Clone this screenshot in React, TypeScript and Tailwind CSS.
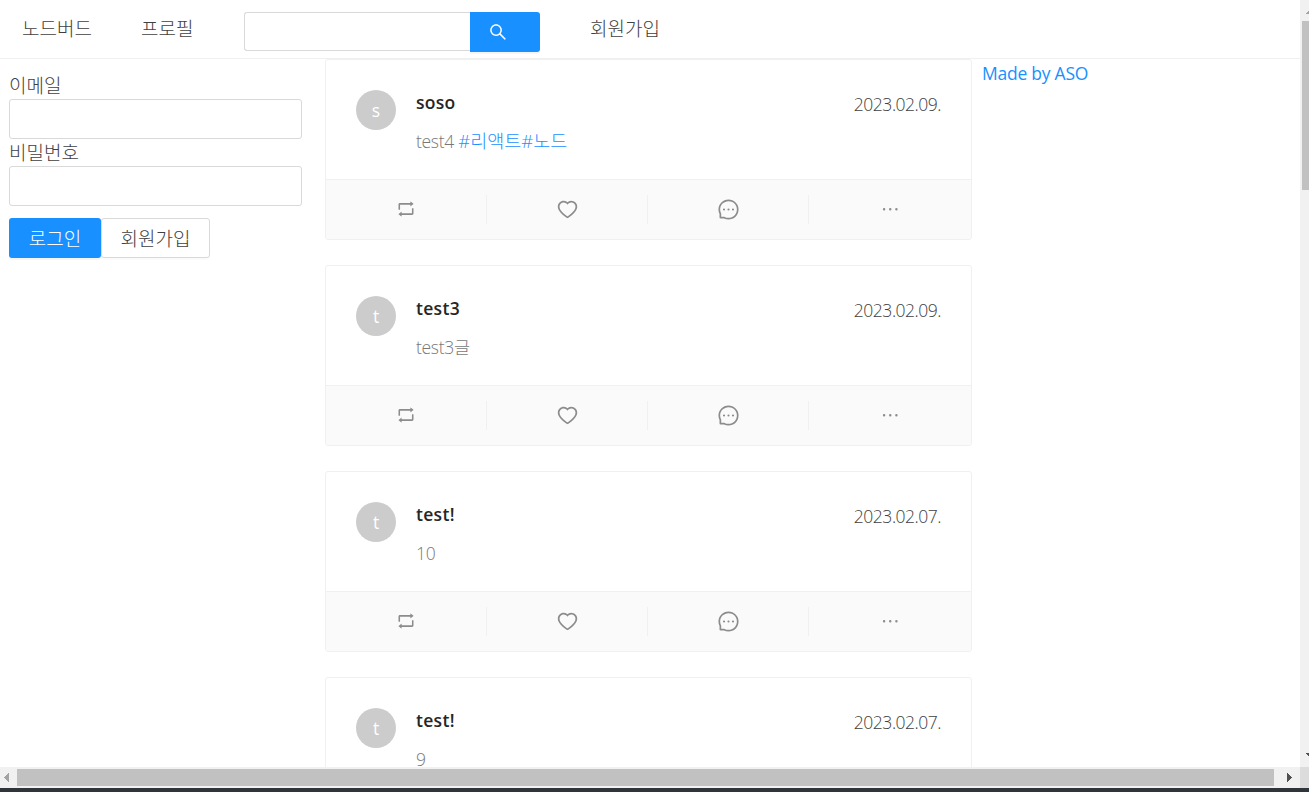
import React from "react";
import {
  AiOutlineEllipsis,
  AiOutlineHeart,
  AiOutlineMessage,
  AiOutlineRetweet,
  AiOutlineSearch,
} from "react-icons/ai";

type Post = { id: number; nickname: string; date: string; content: string; tags?: string[] };

const posts: Post[] = [
  { id: 4, nickname: "soso", date: "2023.02.09.", content: "test4 ", tags: ["#리액트", "#노드"] },
  { id: 3, nickname: "test3", date: "2023.02.09.", content: "test3글" },
  { id: 2, nickname: "test!", date: "2023.02.07.", content: "10" },
  { id: 1, nickname: "test!", date: "2023.02.07.", content: "9" },
];

const actions = [
  { Icon: AiOutlineRetweet, size: 20 },
  { Icon: AiOutlineHeart, size: 23 },
  { Icon: AiOutlineMessage, size: 23 },
  { Icon: AiOutlineEllipsis, size: 22.5 },
];

function Header() {
  return (
    <header className="flex h-[59px] shrink-0 items-start border-b border-[#f0f0f0] pl-[22px] text-[19px] leading-[58px]">
      <a className="w-[119px]">노드버드</a>
      <a className="w-[103px]">프로필</a>
      <div className="mt-3 flex h-10 w-[296px]">
        <input className="h-[39px] w-[226px] rounded-l-[3px] border border-r-0 border-[#d9d9d9] bg-white outline-none" />
        <button className="flex h-10 w-[70px] items-center rounded-r-[3px] bg-[#1890ff] pl-[18px] text-white shadow-[0_2px_0_rgba(0,0,0,0.04)]">
          <AiOutlineSearch size={20} />
        </button>
      </div>
      <a className="ml-[50px]">회원가입</a>
    </header>
  );
}

function LoginForm() {
  return (
    <form className="flex w-[325px] shrink-0 flex-col pt-[13px] pr-[23px] pl-[9px] text-[19px]">
      <label className="h-[27px] leading-[28px]">이메일</label>
      <input className="h-10 rounded-[3px] border border-[#d9d9d9] outline-none" />
      <label className="h-[27px] leading-[28px]">비밀번호</label>
      <input className="h-10 rounded-[3px] border border-[#d9d9d9] outline-none" />
      <div className="mt-3 flex h-10">
        <button type="button" className="w-[92px] rounded-[3px] bg-[#1890ff] pt-0.5 text-white shadow-[0_2px_0_rgba(0,0,0,0.04)]">
          로그인
        </button>
        <button type="button" className="w-[109px] rounded-[3px] border border-[#d9d9d9] bg-white pt-0.5 shadow-[0_2px_0_rgba(0,0,0,0.015)]">
          회원가입
        </button>
      </div>
    </form>
  );
}

function PostCard({ post }: { post: Post }) {
  return (
    <article className="mb-[25px] h-[181px] shrink-0 overflow-hidden rounded-[3px] border border-[#f0f0f0] bg-white">
      <div className="flex h-[119px] px-[30px] pt-[30px]">
        <div className="flex size-10 shrink-0 items-center justify-center rounded-full bg-[#ccc] text-[17.5px] font-normal text-white">
          {post.nickname[0]}
        </div>
        <div className="ml-5 flex-1">
          <h3 className="h-[25px] text-[17.5px] leading-[25px] font-semibold tracking-[0.3px] text-[#262626]">
            {post.nickname}
          </h3>
          <p className="mt-[13px] h-7 text-[17.5px] leading-[26px] tracking-[-0.3px] text-[#787878]">
            {post.content}
            {post.tags?.map((tag) => (
              <a key={tag} className="text-[18.5px] tracking-[0px] text-[#1890ff]">{tag}</a>
            ))}
          </p>
        </div>
        <time className="h-7 text-[17.5px] leading-[28px] tracking-[-0.48px]">{post.date}</time>
      </div>
      <ul className="flex h-[60px] items-center border-t border-[#f0f0f0] bg-[#fafafa] text-[#8c8c8c]">
        {actions.map(({ Icon, size }, i) => (
          <li
            key={i}
            className="flex h-[29px] w-[161px] items-center justify-center border-r border-[#f0f0f0] pb-px last:w-[162px] last:border-r-0"
          >
            <Icon size={size} />
          </li>
        ))}
      </ul>
    </article>
  );
}

function VerticalScrollbar() {
  return (
    <div className="flex w-[9px] shrink-0 flex-col overflow-hidden bg-[#f1f1f1] pl-0.5">
      <svg className="h-[21px] w-[7px] shrink-0" viewBox="0 0 7 21">
        <path d="M4 14V13H5V12H6V11H7V14Z" fill="#a3a3a3" />
      </svg>
      <div className="h-[169px] bg-[#c1c1c1]" />
      <svg className="mt-auto mb-1 h-[17px] w-[7px] shrink-0" viewBox="0 0 7 17">
        <path d="M4 7H7V10H6V9H5V8H4Z" fill="#505050" />
      </svg>
    </div>
  );
}

function HorizontalScrollbar() {
  return (
    <div className="flex h-[21px] shrink-0 bg-[#f1f1f1]">
      <svg className="h-[21px] w-[17px]" viewBox="0 0 17 21">
        <path d="M9 6V15H8V14H7V13H6V12H5V11H4V10H5V9H6V8H7V7H8V6Z" fill="#a3a3a3" />
      </svg>
      <div className="mt-0.5 h-[17px] w-[1257px] bg-[#c1c1c1]" />
      <svg className="h-[21px] w-[26px]" viewBox="0 0 26 21">
        <path d="M13 6H14V7H15V8H16V9H17V10H18V11H17V12H16V13H15V14H14V15H13Z" fill="#505050" />
      </svg>
      <div className="h-[21px] flex-1 bg-[#dcdcdc]" />
    </div>
  );
}

export default function App() {
  return (
    <div className="flex h-[792px] w-[1309px] flex-col overflow-hidden bg-white font-['Open_Sans','Noto_Sans_CJK_KR',sans-serif] font-light text-[#404040]">
      <div className="flex h-[767px] shrink-0">
        <div className="flex min-w-0 flex-1 flex-col overflow-hidden">
          <Header />
          <div className="flex min-h-0 flex-1">
            <LoginForm />
            <main className="flex w-[647px] shrink-0 flex-col overflow-hidden">
              {posts.map((post) => (
                <PostCard key={post.id} post={post} />
              ))}
            </main>
            <aside className="pl-2.5 text-[17.5px] leading-[28px] font-normal tracking-[-0.25px]">
              <a className="text-[#1890ff]">Made by ASO</a>
            </aside>
          </div>
        </div>
        <VerticalScrollbar />
      </div>
      <HorizontalScrollbar />
      <div className="h-1 shrink-0 bg-[#303539]" />
    </div>
  );
}
